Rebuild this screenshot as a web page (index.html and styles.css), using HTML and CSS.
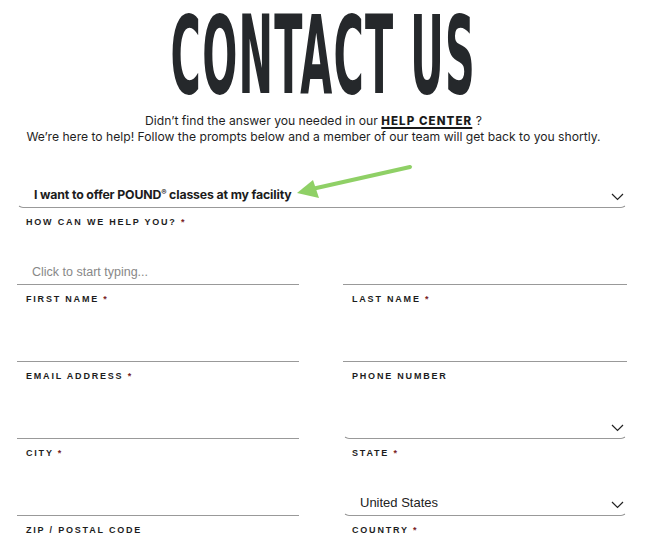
FILE: index.html
```html
<!DOCTYPE html>
<html lang="en">
<head>
<meta charset="utf-8">
<title>Contact Us</title>
<link rel="stylesheet" href="styles.css">
</head>
<body>
<main class="page">
  <h1 class="title"><span class="title-text">CONTACT US</span></h1>
  <p class="intro">Didn’t find the answer you needed in our <a class="help" href="#">HELP CENTER</a> ?<br>We’re here to help! Follow the prompts below and a member of our team will get back to you shortly.</p>
  <form class="form">
    <div class="select select-top">
      <span class="select-text strong">I want to offer POUND<sup class="reg">®</sup> classes at my facility</span>
      <svg class="chev" width="13" height="8" viewBox="0 0 13 8"><path d="M1 1l5.5 5.5L12 1" fill="none" stroke="#222" stroke-width="1.2"/></svg>
    </div>
    <div class="grid">
      <div class="cell">
        <div class="label">HOW CAN WE HELP YOU? <span class="req">*</span></div>
        <div class="control input"><span class="placeholder">Click to start typing...</span></div>
      </div>
      <div class="cell">
        <div class="label"></div>
        <div class="control input"></div>
      </div>
      <div class="cell">
        <div class="label">FIRST NAME <span class="req">*</span></div>
        <div class="control input"></div>
      </div>
      <div class="cell">
        <div class="label">LAST NAME <span class="req">*</span></div>
        <div class="control input"></div>
      </div>
      <div class="cell">
        <div class="label">EMAIL ADDRESS <span class="req">*</span></div>
        <div class="control input"></div>
      </div>
      <div class="cell">
        <div class="label">PHONE NUMBER</div>
        <div class="control select">
          <span class="select-text"></span>
          <svg class="chev" width="13" height="8" viewBox="0 0 13 8"><path d="M1 1l5.5 5.5L12 1" fill="none" stroke="#222" stroke-width="1.2"/></svg>
        </div>
      </div>
      <div class="cell">
        <div class="label">CITY <span class="req">*</span></div>
        <div class="control input"></div>
      </div>
      <div class="cell">
        <div class="label">STATE <span class="req">*</span></div>
        <div class="control select">
          <span class="select-text">United States</span>
          <svg class="chev" width="13" height="8" viewBox="0 0 13 8"><path d="M1 1l5.5 5.5L12 1" fill="none" stroke="#222" stroke-width="1.2"/></svg>
        </div>
      </div>
      <div class="cell">
        <div class="label">ZIP / POSTAL CODE</div>
      </div>
      <div class="cell">
        <div class="label">COUNTRY <span class="req">*</span></div>
      </div>
    </div>
  </form>
  <svg class="arrow" width="645" height="548" viewBox="0 0 645 548">
    <line x1="410" y1="167" x2="312" y2="189" stroke="#8fd066" stroke-width="4" stroke-linecap="round"/>
    <polygon points="297,193 313,180 319,198" fill="#8fd066"/>
  </svg>
</main>
</body>
</html>
```
FILE: styles.css
```css
html, body {
  margin: 0;
  padding: 0;
  background: #fff;
}
body {
  font-family: "Liberation Sans", Arial, sans-serif;
  color: #222;
}
.page {
  position: relative;
  width: 645px;
  height: 548px;
  overflow: hidden;
}
.title {
  display: flex;
  justify-content: center;
  margin: 16px 0 17px;
  padding-left: 2px;
  height: 80px;
  line-height: 80px;
  font-family: "DejaVu Sans", sans-serif;
  font-stretch: condensed;
  font-weight: 700;
  font-size: 108px;
  color: #25282b;
  white-space: nowrap;
}
.title-text {
  display: block;
  flex: none;
  transform: scaleX(0.425);
  letter-spacing: 3px;
}
.intro {
  margin: 0;
  padding-right: 18px;
  text-align: center;
  font-family: "Inter", sans-serif;
  font-size: 12.15px;
  line-height: 16px;
  color: #1f1f1f;
}
.help {
  color: #1a1a1a;
  font-weight: 800;
  font-size: 11.5px;
  letter-spacing: 1.1px;
  text-decoration: underline;
  text-underline-offset: 2px;
  text-decoration-thickness: 1.5px;
}
.form {
  margin: 36px 18px 0 17px;
}
.select {
  display: flex;
  align-items: center;
  justify-content: space-between;
  height: 26px;
  border: 1px solid transparent;
  border-top: 0;
  border-bottom-color: #999;
  border-radius: 0 0 6px 6px;
  padding: 0 2px 0 16px;
}
.select-text {
  font-size: 13px;
  color: #222;
}
.strong {
  font-family: "Inter", sans-serif;
  font-weight: 700;
  font-size: 12.3px;
  letter-spacing: -0.15px;
  color: #1c1c1c;
}
.reg {
  font-size: 8px;
  vertical-align: 4px;
  line-height: 0;
}
.chev {
  display: block;
  margin-top: 5px;
}
.select-top .chev {
  margin-top: 6px;
}
.grid {
  display: grid;
  grid-template-columns: 282px 284px;
  column-gap: 44px;
}
.cell {
  padding-top: 8px;
}
.label {
  height: 12px;
  line-height: 12px;
  padding-left: 9px;
  font-size: 9px;
  font-weight: 700;
  letter-spacing: 1.8px;
  color: #1d1d1d;
}
.req {
  color: #7a1f1f;
}
.control {
  margin-top: 30px;
}
.input {
  height: 26px;
  line-height: 26px;
  border-bottom: 1px solid #999;
  padding-left: 15px;
}
.placeholder {
  font-size: 12.5px;
  color: #888;
}
.arrow {
  position: absolute;
  left: 0;
  top: 0;
  pointer-events: none;
}
```
